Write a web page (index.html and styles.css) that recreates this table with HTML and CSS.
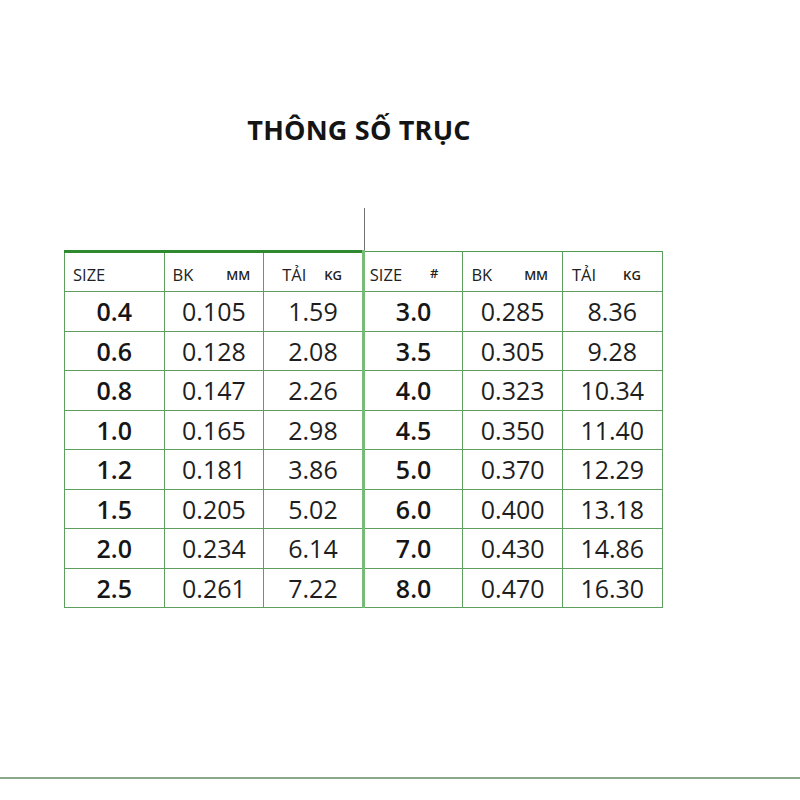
FILE: index.html
```html
<!DOCTYPE html>
<html lang="vi">
<head>
<meta charset="utf-8">
<title>Thông số trục</title>
<link rel="stylesheet" href="styles.css">
</head>
<body>
<div class="sheet">
  <h1 class="title">THÔNG SỐ TRỤC</h1>
  <div class="tick"></div>
  <table class="spec">
    <colgroup>
      <col class="c"><col class="c"><col class="c"><col class="c"><col class="c"><col class="c">
    </colgroup>
    <thead>
      <tr>
        <th class="h h-l h1"><span class="lbl">SIZE</span></th>
        <th class="h h-l h2"><span class="lbl">BK</span><span class="unit u-mm">MM</span></th>
        <th class="h h-l h3 mid"><span class="lbl">TẢI</span><span class="unit u-kg">KG</span></th>
        <th class="h h-r h4"><span class="lbl">SIZE</span><span class="unit u-hash">#</span></th>
        <th class="h h-r h5"><span class="lbl">BK</span><span class="unit u-mm2">MM</span></th>
        <th class="h h-r h6"><span class="lbl">TẢI</span><span class="unit u-kg2">KG</span></th>
      </tr>
    </thead>
    <tbody>
      <tr><td class="sz">0.4</td><td>0.105</td><td class="mid">1.59</td><td class="sz">3.0</td><td>0.285</td><td>8.36</td></tr>
      <tr><td class="sz">0.6</td><td>0.128</td><td class="mid">2.08</td><td class="sz">3.5</td><td>0.305</td><td>9.28</td></tr>
      <tr><td class="sz">0.8</td><td>0.147</td><td class="mid">2.26</td><td class="sz">4.0</td><td>0.323</td><td>10.34</td></tr>
      <tr><td class="sz">1.0</td><td>0.165</td><td class="mid">2.98</td><td class="sz">4.5</td><td>0.350</td><td>11.40</td></tr>
      <tr><td class="sz">1.2</td><td>0.181</td><td class="mid">3.86</td><td class="sz">5.0</td><td>0.370</td><td>12.29</td></tr>
      <tr><td class="sz">1.5</td><td>0.205</td><td class="mid">5.02</td><td class="sz">6.0</td><td>0.400</td><td>13.18</td></tr>
      <tr><td class="sz">2.0</td><td>0.234</td><td class="mid">6.14</td><td class="sz">7.0</td><td>0.430</td><td>14.86</td></tr>
      <tr><td class="sz">2.5</td><td>0.261</td><td class="mid">7.22</td><td class="sz">8.0</td><td>0.470</td><td>16.30</td></tr>
    </tbody>
  </table>
</div>
<div class="baseline"></div>
</body>
</html>
```

FILE: styles.css
```css
html, body {
  margin: 0;
  padding: 0;
  background: #ffffff;
}
body {
  width: 800px;
  height: 800px;
  font-family: "Open Sans", "Noto Sans", sans-serif;
  color: #1a1a1a;
  overflow: hidden;
}
.sheet {
  padding: 112px 0 0 64px;
  width: 598px;
}
.title {
  margin: 0;
  font-size: 27px;
  line-height: 36px;
  font-weight: 700;
  text-align: center;
  padding-right: 8px;
  color: #141414;
  letter-spacing: 0.2px;
}
.tick {
  margin: 60px 0 0 300px;
  width: 1px;
  height: 42px;
  background: #707070;
}
.spec {
  border-collapse: collapse;
  table-layout: fixed;
  width: 598px;
}
.spec .c {
  width: 99.6px;
}
.spec th, .spec td {
  border: 1px solid #5e9e5e;
  padding: 0;
}
.spec th {
  height: 33px;
  text-align: left;
  font-weight: 400;
  white-space: nowrap;
  vertical-align: middle;
  padding-top: 5px;
}
.spec th.h-l {
  border-top: 3px solid #2f8a2f;
}
.spec th.h-r {
  border-top: 1px solid #4f9a4f;
}
.spec .mid {
  border-right: 3px solid #78bb78;
}
.lbl {
  font-size: 16.5px;
  color: #222;
}
.unit {
  font-size: 13px;
  font-weight: 600;
  color: #222;
  position: relative;
  top: -1px;
}
.spec th.h1 { padding-left: 8px; }
.spec th.h2 { padding-left: 8px; }
.spec th.h3 { padding-left: 18px; }
.spec th.h4 { padding-left: 5px; }
.spec th.h5 { padding-left: 8px; }
.spec th.h6 { padding-left: 9px; }
.u-mm { margin-left: 33px; }
.u-kg { margin-left: 18px; }
.u-hash { margin-left: 28px; font-size: 13px; top: -3px; }
.u-mm2 { margin-left: 32px; }
.u-kg2 { margin-left: 27px; }
.spec td {
  height: 38.5px;
  text-align: center;
  vertical-align: middle;
  font-size: 25px;
  line-height: 30px;
  color: #1e1e1e;
}
.spec td.sz {
  font-weight: 600;
  color: #161616;
}
.baseline {
  margin-top: 169px;
  width: 800px;
  height: 2px;
  background: #8aa88a;
}
```
